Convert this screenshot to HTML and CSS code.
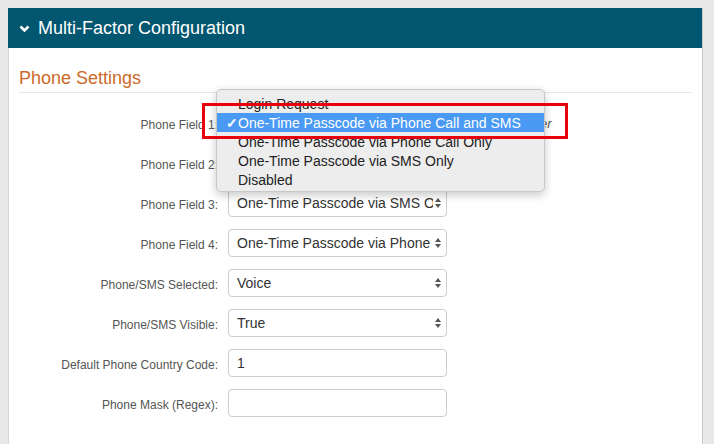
FILE: index.html
```html
<!DOCTYPE html>
<html lang="en">
<head>
  <meta charset="UTF-8">
  <title>Multi-Factor Configuration</title>
  <link rel="stylesheet" href="styles.css">
</head>
<body>
  <div class="panel">
    <div class="panel-heading">
      <svg class="chevron" width="11" height="8" viewBox="0 0 11 8"><path d="M1.5 1.5 L5.5 5.5 L9.5 1.5" fill="none" stroke="#fff" stroke-width="2.6"/></svg>
      <span>Multi-Factor Configuration</span>
    </div>
    <div class="panel-body">
      <h3 class="section-title">Phone Settings</h3>
      <div class="form-rows">
        <div class="row">
          <label>Phone Field 1:</label>
          <div class="select"><span>One-Time Passcode via Phone Call and SMS</span><svg width="6" height="10" viewBox="0 0 6 10"><polygon points="0,4 3,0 6,4" fill="#555"/><polygon points="0,6 3,10 6,6" fill="#555"/></svg></div>
          <span class="help">Primary Number</span>
        </div>
        <div class="row">
          <label>Phone Field 2:</label>
          <div class="select"><span>One-Time Passcode via Phone Call Only</span><svg width="6" height="10" viewBox="0 0 6 10"><polygon points="0,4 3,0 6,4" fill="#555"/><polygon points="0,6 3,10 6,6" fill="#555"/></svg></div>
        </div>
        <div class="row">
          <label>Phone Field 3:</label>
          <div class="select"><span>One-Time Passcode via SMS Only</span><svg width="6" height="10" viewBox="0 0 6 10"><polygon points="0,4 3,0 6,4" fill="#555"/><polygon points="0,6 3,10 6,6" fill="#555"/></svg></div>
        </div>
        <div class="row">
          <label>Phone Field 4:</label>
          <div class="select"><span>One-Time Passcode via Phone Call Only</span><svg width="6" height="10" viewBox="0 0 6 10"><polygon points="0,4 3,0 6,4" fill="#555"/><polygon points="0,6 3,10 6,6" fill="#555"/></svg></div>
        </div>
        <div class="row">
          <label>Phone/SMS Selected:</label>
          <div class="select"><span>Voice</span><svg width="6" height="10" viewBox="0 0 6 10"><polygon points="0,4 3,0 6,4" fill="#555"/><polygon points="0,6 3,10 6,6" fill="#555"/></svg></div>
        </div>
        <div class="row">
          <label>Phone/SMS Visible:</label>
          <div class="select"><span>True</span><svg width="6" height="10" viewBox="0 0 6 10"><polygon points="0,4 3,0 6,4" fill="#555"/><polygon points="0,6 3,10 6,6" fill="#555"/></svg></div>
        </div>
        <div class="row">
          <label>Default Phone Country Code:</label>
          <div class="input">1</div>
        </div>
        <div class="row">
          <label>Phone Mask (Regex):</label>
          <div class="input"></div>
        </div>
      </div>
    </div>
  </div>

  <div class="dropdown">
    <div class="option"><span class="check"></span>Login Request</div>
    <div class="option selected"><span class="check">&#10003;</span>One-Time Passcode via Phone Call and SMS</div>
    <div class="option"><span class="check"></span>One-Time Passcode via Phone Call Only</div>
    <div class="option"><span class="check"></span>One-Time Passcode via SMS Only</div>
    <div class="option"><span class="check"></span>Disabled</div>
  </div>
  <div class="callout"></div>
</body>
</html>
```

FILE: styles.css
```css
body {
  margin: 8px 0 0 8px;
  background-color: #e8e8e8;
  font-family: 'Liberation Sans', Arial, sans-serif;
  overflow: hidden;
}
.panel {
  width: 695px;
  height: 436px;
  background-color: #fff;
  border-left: 1px solid #d6d6d6;
  border-right: 1px solid #c9c9c9;
  box-sizing: border-box;
}
.panel-heading {
  display: flex;
  align-items: center;
  height: 40px;
  margin-left: -1px;
  padding-left: 11px;
  background-color: #02566f;
  color: #fff;
  font-size: 18px;
}
.chevron {
  margin-right: 8px;
  margin-top: 1px;
}
.panel-body {
  padding: 18px 10px 0 10px;
}
.section-title {
  margin: 0;
  padding-bottom: 2px;
  font-size: 18px;
  font-weight: normal;
  line-height: 24px;
  color: #cc6a2a;
  border-bottom: 1px solid #e6e6e6;
}
.form-rows {
  display: flex;
  flex-direction: column;
  gap: 12px;
  margin-top: 16px;
}
.row {
  display: flex;
  align-items: center;
  height: 28px;
}
.row label {
  width: 199px;
  margin-right: 10px;
  text-align: right;
  font-size: 12px;
  color: #555;
  padding-top: 3px;
}
.select, .input {
  display: flex;
  align-items: center;
  justify-content: space-between;
  width: 219px;
  height: 28px;
  box-sizing: border-box;
  padding: 0 5px 0 8px;
  border: 1px solid #ccc;
  border-radius: 4px;
  font-size: 14px;
  color: #333;
}
.select span {
  white-space: nowrap;
  overflow: hidden;
  width: 196px;
}
.select svg {
  flex-shrink: 0;
}
.help {
  margin-left: 10px;
  font-size: 13px;
  font-style: italic;
  color: #555;
}
.dropdown {
  position: absolute;
  left: 216px;
  top: 89px;
  width: 329px;
  height: 103px;
  box-sizing: border-box;
  padding-top: 4px;
  background-color: #ededed;
  border: 1px solid #c8c8c8;
  border-radius: 5px;
  box-shadow: 0 3px 10px rgba(0, 0, 0, 0.22);
}
.option {
  display: flex;
  align-items: center;
  height: 19px;
  padding-left: 9px;
  font-size: 14px;
  color: #222;
}
.option.selected {
  background-color: #4a9af4;
  color: #fff;
}
.check {
  width: 12px;
  font-size: 14px;
  font-weight: bold;
}
.callout {
  position: absolute;
  left: 202px;
  top: 103px;
  width: 366px;
  height: 36px;
  box-sizing: border-box;
  border: 3px solid #e8000b;
}
```
